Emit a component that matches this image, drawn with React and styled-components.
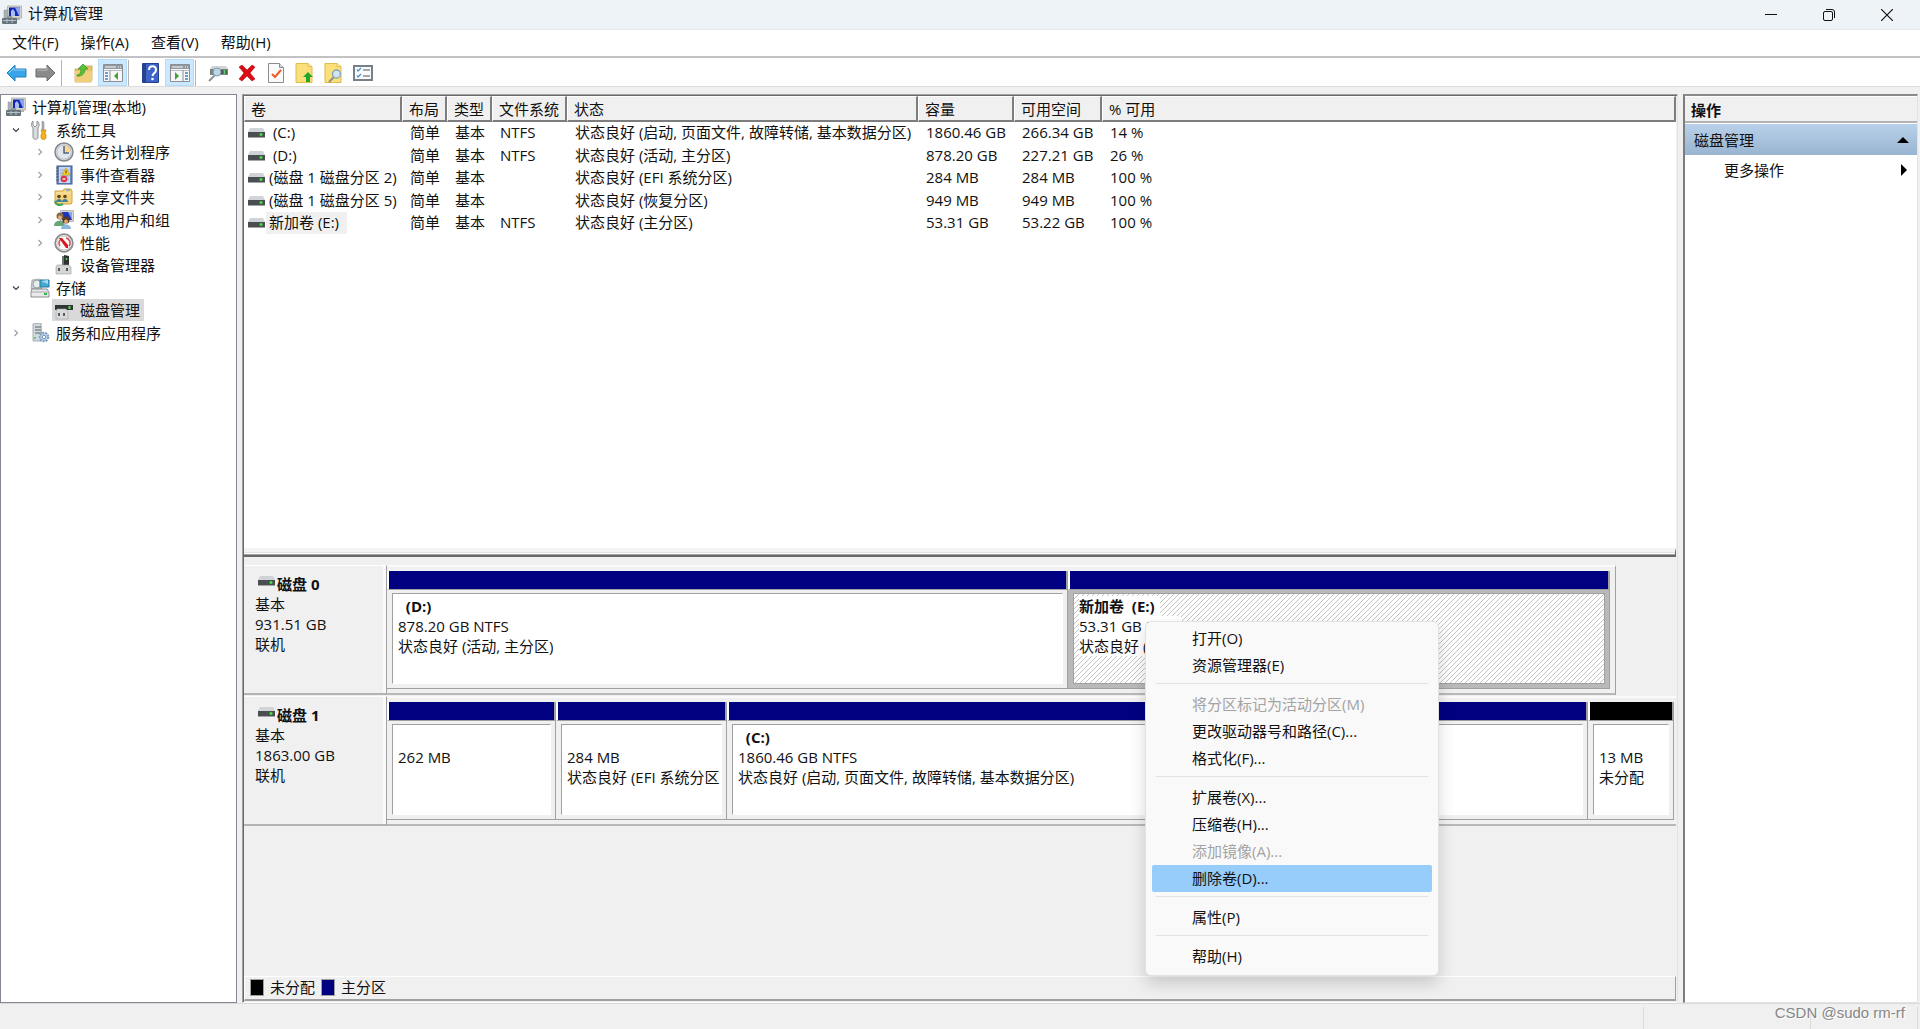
import { useState } from 'react'
import styled, { createGlobalStyle } from 'styled-components'

const colors = {
    face: '#f0f0f0',
    line: '#a0a0a0',
    dark: '#696969',
    light: '#e3e3e3',
    primary: '#000080',
    unallocated: '#000000',
    text: '#111111',
    disabled: '#a3a3a3',
}

const GlobalStyle = createGlobalStyle`
    * {
        box-sizing: border-box;
    }
    body {
        margin: 0;
        background: ${colors.face};
        color: ${colors.text};
        font-family: 'Open Sans', 'Noto Sans CJK SC', sans-serif;
        font-size: 15px;
        line-height: 20px;
    }
    button {
        margin: 0;
        padding: 0;
        border: 0;
        background: none;
        color: inherit;
        font: inherit;
        text-align: left;
    }
    svg {
        display: block;
        flex: none;
    }
`

const Window = styled.div`
    display: flex;
    flex-direction: column;
    height: 100vh;
    overflow: hidden;
    white-space: nowrap;
`

const TitleBar = styled.header`
    display: flex;
    align-items: center;
    height: 29px;
    padding: 0 4px 0 2px;
    background: #eef3f8;
`

const Title = styled.h1`
    flex: 1;
    margin: 0 0 0 6px;
    padding-bottom: 3px;
    font-size: 15px;
    font-weight: 400;
`

const WindowButton = styled.button`
    display: grid;
    place-items: center;
    width: 58px;
    height: 28px;
`

const MenuBar = styled.nav`
    display: flex;
    gap: 2px;
    height: 29px;
    padding-left: 2px;
    border-top: 1px solid #e6e9ec;
    border-bottom: 2px solid #c2c2c4;
    background: #fff;
`

const MenuBarItem = styled.button`
    padding: 0 10px 2px;
`

const ToolBar = styled.div`
    display: flex;
    align-items: flex-end;
    height: 29px;
    padding-left: 2px;
    border-bottom: 1px solid #dcdcdc;
    background: #fff;
`

const ToolButton = styled.button`
    display: grid;
    place-items: center;
    width: 29px;
    height: 27px;
    border: 1px solid ${props => props.$active ? '#b5dbfb' : 'transparent'};
    background: ${props => props.$active ? '#cce8ff' : 'transparent'};
`

const ToolSeparator = styled.span`
    width: 1px;
    height: 26px;
    margin: 0 7px 0 1px;
    background: #b4b4b4;
`

const Main = styled.main`
    display: grid;
    grid-template-columns: 237px minmax(0, 1fr) 235px;
    gap: 5px;
    flex: 1;
    min-height: 0;
    padding: 7px 2px 0 0;
`

const TreePane = styled.nav`
    border: 1px solid #828790;
    background: #fff;
`

const Tree = styled.ul`
    display: grid;
    grid-template-rows: repeat(11, 1fr);
    height: 248px;
    margin: 1px 0 0;
    padding: 0;
    list-style: none;
`

const TreeRow = styled.li`
    display: flex;
    align-items: center;
    padding-left: ${props => props.$indent}px;
`

const Expander = styled.span`
    display: grid;
    place-items: center;
    width: 20px;
    margin-right: 2px;
`

const TreeLabel = styled.button`
    display: flex;
    align-items: center;
    gap: 6px;
    height: 22px;
    padding: 0 4px 0 2px;
    background: ${props => props.$selected ? '#d9d9d9' : 'transparent'};
`

const CenterPane = styled.section`
    display: flex;
    flex-direction: column;
    min-width: 0;
    border: 1px solid;
    border-color: ${colors.line} ${colors.light} #fff ${colors.line};
    box-shadow: inset 1px 1px 0 ${colors.dark};
    padding: 1px;
`

const VolumeList = styled.div`
    flex: 452 1 0;
    min-height: 0;
    overflow: hidden;
    background: #fff;
`

const VolumeTable = styled.table`
    width: 100%;
    table-layout: fixed;
    border-collapse: separate;
    border-spacing: 0;
`

const HeadCell = styled.th`
    width: ${props => props.$width ? props.$width + 'px' : 'auto'};
    height: 26px;
    padding: 0 0 0 6px;
    border: solid;
    border-width: 1px 2px 2px 1px;
    border-color: #fff #7d7d7d #7d7d7d #fff;
    background: ${colors.face};
    font-weight: 400;
    text-align: left;
`

const VolumeRow = styled.tr`
    height: 22px;
    &:nth-child(even) {
        height: 23px;
    }
`

const Cell = styled.td`
    padding: 0 0 2px 8px;
`

const NameCell = styled(Cell)`
    padding: 0 0 0 4px;
`

const VolumeName = styled.div`
    display: flex;
    align-items: center;
    gap: 1px;
    span {
        padding: 0 8px 2px 3px;
        background: ${props => props.$selected ? colors.face : 'transparent'};
    }
`

const Splitter = styled.div`
    height: 9px;
    border: solid;
    border-width: 4px 1px 2px 0;
    border-color: #f4f4f4 ${colors.dark} ${colors.dark} ${colors.light};
    background: #fff;
    box-shadow: inset 0 1px 0 ${colors.light}, inset 0 -1px 0 ${colors.line};
`

const DiskPane = styled.div`
    flex: 411 1 0;
    min-height: 0;
    padding-top: 8px;
    overflow: hidden;
`

const DiskRow = styled.div`
    display: grid;
    grid-template-columns: 143px minmax(0, 1fr);
    height: 131px;
    padding-bottom: 1px;
`

const DiskLabel = styled.div`
    padding: 8px 0 0 11px;
    border: solid;
    border-width: 1px 1px 2px 0;
    border-color: #fff ${colors.line} #b4b4b4;
    box-shadow: inset -3px 0 0 #fafafa;
`

const DiskName = styled.strong`
    display: flex;
    gap: 2px;
    padding-left: 3px;
    svg {
        margin-top: 2px;
    }
`

const DiskMap = styled.div`
    display: flex;
    margin-right: ${props => props.$short ? 60 : 0}px;
    padding: 4px ${props => props.$short ? 5 : 2}px 4px 0;
    border: solid;
    border-width: 2px ${props => props.$short ? 1 : 0}px 2px 0;
    border-color: #fafafa ${colors.line} #b8b8b8;
`

const Partition = styled.div`
    display: flex;
    flex-direction: column;
    flex: ${props => props.$span} 1 0;
    min-width: 0;
    border-bottom: 1px solid ${colors.line};
`

const PartitionBar = styled.div`
    height: 19px;
    border: solid;
    border-width: 0 2px 1px 2px;
    border-color: #fff ${colors.line} ${colors.line} #fff;
    background: ${props => colors[props.$kind]};
`

const PartitionBody = styled.div`
    flex: 1;
    padding: 3px 4px 4px 5px;
    border-right: 1px solid ${colors.line};
    background: ${props => props.$selected ? '#b9b9b9' : colors.face};
`

const PartitionInfo = styled.div`
    height: 100%;
    padding: 2px 0 0 5px;
    overflow: hidden;
    border: 1px solid;
    border-color: ${colors.line} ${props => props.$selected ? colors.line : '#fff'} ${props => props.$selected ? colors.line : '#fff'} ${colors.line};
    background-color: #fff;
    background-image: ${props => props.$selected
        ? 'linear-gradient(135deg, #fff 44%, #c4c4c4 44% 56%, #fff 56%)'
        : 'none'};
    background-size: 5px 5px;
    p {
        width: fit-content;
        height: 20px;
        margin: 0;
        background: #fff;
    }
    p:first-child {
        padding-right: 5px;
        font-weight: 700;
    }
`

const Legend = styled.div`
    display: flex;
    align-items: center;
    gap: 6px;
    height: 25px;
    padding: 0 0 2px 5px;
    border: solid;
    border-width: 1px 1px 2px 1px;
    border-color: #fff ${colors.line} ${colors.line} #fff;
`

const LegendColor = styled.span`
    width: 14px;
    height: 17px;
    border: 1px solid ${colors.line};
    background: ${props => colors[props.$kind]};
`

const ActionPane = styled.aside`
    border: solid;
    border-width: 2px 1px 1px 2px;
    border-color: #8a8a8a ${colors.light} ${colors.light} #7d7d7d;
    background: #fff;
`

const ActionHead = styled.h2`
    height: 27px;
    margin: 0;
    padding: 3px 0 0 6px;
    border-top: 1px solid #fff;
    border-bottom: 2px solid #b4b4b4;
    background: ${colors.face};
    font-size: 15px;
    font-weight: 700;
`

const ActionButton = styled.button`
    display: flex;
    align-items: center;
    justify-content: space-between;
    width: 100%;
    height: ${props => props.$group ? 31 : 29}px;
    padding: 0 ${props => props.$group ? 8 : 10}px 0 ${props => props.$group ? 9 : 39}px;
    background: ${props => props.$group ? 'linear-gradient(#b9d1ea, #99b4d1)' : 'none'};
`

const ActionGroup = styled.div`
    padding-top: 1px;
`

const StatusBar = styled.footer`
    display: grid;
    grid-template-columns: minmax(0, 1fr) 167px 107px;
    height: 26px;
    padding: 3px 2px 0 0;
    border-top: 1px solid #dadada;
    span {
        border-right: 1px solid #dcdcdc;
    }
`

const Watermark = styled.div`
    position: absolute;
    right: 15px;
    bottom: 6px;
    color: #868686;
    font-family: 'Liberation Sans', sans-serif;
    text-shadow: 1px 1px 0 #fff;
`

const ContextMenu = styled.div`
    position: absolute;
    top: 621px;
    left: 1145px;
    width: 294px;
    padding: 3px 6px 5px;
    border: 1px solid #e2e2e2;
    border-radius: 6px;
    background: #f9f9f9;
    box-shadow: 0 8px 16px rgba(0, 0, 0, 0.16);
    hr {
        height: 1px;
        margin: 4px 4px 7px;
        border: 0;
        background: #e2e2e2;
    }
`

const MenuItem = styled.button`
    display: block;
    width: 100%;
    height: 27px;
    padding: 0 0 2px 40px;
    border-radius: 2px;
    &:disabled {
        color: ${colors.disabled};
    }
    ${props => props.$active && 'background: #96cdfb;'}
`

function Computer() {
    return (
        <svg width="20" height="20" viewBox="0 0 20 20">
            <path d="M5.500 1h14v12h-14z" fill="#d6d5cd" stroke="#a5a49d" strokeWidth=".7" />
            <path d="M7 2.500h11v8.500H7z" fill="#1226b8" />
            <path d="M13 2.500h5v8.500h-1z" fill="#8aa4ee" />
            <path d="M9 11V6l2-2 2 3v4z" fill="#a9bdf5" />
            <path d="M2 5h4v8H2z" fill="#aab1b5" stroke="#8b9296" strokeWidth=".5" />
            <path d="M14 13h4v2h-4z" fill="#b5b4ac" />
            <path d="M5 11h5v3H5z" fill="#8c969b" />
            <rect x="0" y="13" width="15" height="6" rx="1" fill="#66757d" />
            <path d="M1 15.500h13M5 14v4M10 14v4" stroke="#b5c1c6" />
        </svg>
    )
}

function Tools() {
    return (
        <svg width="20" height="20" viewBox="0 0 20 20">
            <path d="M3 1v4l2 2 2-2V1c2 1 3 4 1 7v9c0 3-5 3-5 0V8C1 6 1 3 3 1z" fill="#d9dcde" stroke="#8b9093" />
            <path d="M12 1l2 1v8h-2z" fill="#a7acaf" stroke="#888" strokeWidth=".5" />
            <path d="M11 10h5l-1 3 1 2v3c-1 2-4 2-5 0v-3l1-2z" fill="#f7b21b" stroke="#c98508" strokeWidth=".7" />
        </svg>
    )
}

function Clock() {
    return (
        <svg width="20" height="20" viewBox="0 0 20 20">
            <circle cx="10" cy="10" r="9" fill="#dfe6ed" stroke="#858585" strokeWidth="1.500" />
            <path d="M10 10V3a7 7 0 0 1 7 7z" fill="#f9d695" />
            <circle cx="10" cy="10" r="7.200" fill="none" stroke="#b9bec4" />
            <path d="M10 4v7h5" fill="none" stroke="#50637c" strokeWidth="1.500" />
        </svg>
    )
}

function EventLog() {
    return (
        <svg width="20" height="20" viewBox="0 0 20 20">
            <rect x="3" y="1" width="15" height="18" fill="#6f8fc5" stroke="#405b93" />
            <path d="M5 2h11v16H5z" fill="#c9d8f0" />
            <path d="M6 5h9M6 8h9M6 11h9M6 14h9" stroke="#8ea6d0" />
            <path d="M2 3h3M2 6h3M2 9h3M2 12h3M2 15h3" stroke="#5f6470" strokeWidth="1.200" />
            <path d="M12 3l4 7H8z" fill="#ffd51f" stroke="#bf940c" strokeWidth=".6" />
            <path d="M12 5.500v3" stroke="#333" />
            <circle cx="10" cy="14" r="3.300" fill="#d93545" />
            <path d="M8.500 14h3" stroke="#fff" strokeWidth="1.300" />
        </svg>
    )
}

function SharedFolder() {
    return (
        <svg width="20" height="20" viewBox="0 0 20 20">
            <path d="M1 4h8l1-2h7l1 2v12l-1 1H1z" fill="#f6d27a" stroke="#d0a443" />
            <path d="M12 3h4" stroke="#64a8d8" strokeWidth="1.500" />
            <path d="M2 6h15" stroke="#fbe7b0" />
            <circle cx="5" cy="9.500" r="1.800" fill="#5d4426" />
            <circle cx="11" cy="9.500" r="1.800" fill="#5d4426" />
            <path d="M2 15c0-4 6-4 6 0zM8 15c0-4 6-4 6 0z" fill="#3f7f9e" />
            <path d="M1 14c1 4 4 5 8 3" fill="none" stroke="#37a45a" strokeWidth="2" />
        </svg>
    )
}

function Users() {
    return (
        <svg width="20" height="20" viewBox="0 0 20 20">
            <path d="M6.500 .500h13v11h-13z" fill="#d6d5cd" stroke="#a5a49d" strokeWidth=".7" />
            <path d="M8 2h10v8H8z" fill="#1b35bd" />
            <path d="M14 2h4v8z" fill="#8aa4ee" />
            <circle cx="6" cy="6" r="3.500" fill="#8a6a45" />
            <circle cx="6" cy="7.500" r="2" fill="#e3ae7d" />
            <path d="M0 16c0-7 11-7 11 0z" fill="#69a578" />
            <circle cx="12" cy="10" r="3.500" fill="#5b3a21" />
            <circle cx="12" cy="11.500" r="2" fill="#dca879" />
            <path d="M7 19c0-6 10-6 10 0z" fill="#8ab8dc" />
        </svg>
    )
}

function Gauge() {
    return (
        <svg width="20" height="20" viewBox="0 0 20 20">
            <circle cx="10" cy="10" r="8.800" fill="#fafafa" stroke="#8a8a8a" strokeWidth="1.800" />
            <circle cx="10" cy="10" r="7" fill="none" stroke="#c7c7c7" />
            <path d="M6 13a5 5 0 0 1 1-7M12 5a5 5 0 0 1 3 8" fill="none" stroke="#d9484c" strokeWidth="1.500" />
            <path d="M5 5l3 0 6 7v3h-2z" fill="#dd161d" />
        </svg>
    )
}

function Device() {
    return (
        <svg width="20" height="20" viewBox="0 0 20 20">
            <path d="M8 1h5v9H8z" fill="#6d7571" />
            <path d="M10 0l5 1v9h-5z" fill="#2c332f" />
            <path d="M12.500 3v2" stroke="#58d261" strokeWidth="1.500" />
            <path d="M3 10h12l2 2v7H2v-7z" fill="#d3d5d7" stroke="#9b9da0" strokeWidth=".6" />
            <path d="M5 13v3M13 13v3" stroke="#333" strokeWidth="1.500" />
        </svg>
    )
}

function Storage() {
    return (
        <svg width="20" height="20" viewBox="0 0 20 20">
            <path d="M2 2l8-1 2 10H1z" fill="#c9d0d2" stroke="#939b9e" strokeWidth=".7" />
            <circle cx="7" cy="6" r="4" fill="#e8eeee" stroke="#92a19e" />
            <path d="M10 2h9v7h-9z" fill="#47a8d0" stroke="#29789c" />
            <path d="M11 3l7-1v4z" fill="#a4def1" />
            <path d="M2 11h15l2 3v5H1v-5z" fill="#e7e9ea" stroke="#777" strokeWidth=".8" />
            <path d="M1 14h18" stroke="#aaa" />
            <path d="M14 16h3" stroke="#2bb943" strokeWidth="2" />
        </svg>
    )
}

function DiskManager() {
    return (
        <svg width="20" height="20" viewBox="0 0 20 20">
            <path d="M4 2h12l2 3H2z" fill="#d3d5d7" />
            <path d="M1 5h18v5H1z" fill="#303733" />
            <path d="M15.500 6v3" stroke="#53dd54" strokeWidth="2" />
            <path d="M3 9h9l2 3v7H2v-7z" fill="#d8dadc" stroke="#a1a4a7" strokeWidth=".6" />
            <path d="M5 13v3M10 13v3" stroke="#333" strokeWidth="1.500" />
        </svg>
    )
}

function Services() {
    return (
        <svg width="20" height="20" viewBox="0 0 20 20">
            <path d="M3 1l8-1 1 18H3z" fill="#d2dadd" stroke="#899398" strokeWidth=".7" />
            <path d="M5 4h6M5 7h6M5 10h6" stroke="#58656b" />
            <path d="M5 14v2" stroke="#4dba5a" strokeWidth="1.500" />
            <circle cx="14" cy="14" r="4.300" fill="#b9d1e8" stroke="#7f9fbf" strokeWidth="2" strokeDasharray="2 1" />
            <circle cx="14" cy="14" r="1.700" fill="#fff" stroke="#7895b3" />
        </svg>
    )
}

function Drive() {
    return (
        <svg width="17" height="10" viewBox="0 0 17 10">
            <path d="M2 0h13l2 4H0z" fill="#d0d4d8" />
            <path d="M0 4h17v5H0z" fill="#4b4e50" />
            <path d="M0 9h17v1H0z" fill="#a3a6a8" />
            <path d="M13 5v3M11.500 6.500h3" stroke="#3ce63e" strokeWidth="1.500" />
        </svg>
    )
}

function Arrow({ color, edge, flip }) {
    return (
        <svg width="21" height="18" viewBox="0 0 21 18">
            <path
                d="M1 9l8-8v4h11v8H9v4z"
                fill={color}
                stroke={edge}
                strokeLinejoin="round"
                transform={flip ? 'rotate(180 10.5 9)' : undefined}
            />
            <path d={flip ? 'M2 6h10V3' : 'M3 9l5-5v2h11'} fill="none" stroke="#fff" strokeOpacity=".45" />
        </svg>
    )
}

function FolderUp() {
    return (
        <svg width="20" height="20" viewBox="0 0 20 20">
            <path d="M1 6h8l2-3h7v14l-1 2H1z" fill="#e8c367" stroke="#c49a3b" strokeWidth=".7" />
            <path d="M1 8h17v11H1z" fill="#f0cf7c" />
            <path d="M3 12c3 0 4-3 4-6H4l5-5 5 5h-3c0 4-3 8-8 7z" fill="#52c33b" stroke="#30912a" strokeWidth=".7" />
        </svg>
    )
}

function PanelIcon({ right }) {
    return (
        <svg width="20" height="18" viewBox="0 0 20 18">
            <path d="M.500.500h19v17H.500z" fill="#f7f7f7" stroke="#8a9096" />
            <path d="M1 1h18v4H1z" fill="#8f979f" />
            <path d="M2 3h11M15 3h1M17 3h1" stroke="#fff" />
            <path d="M1 6.500h18" stroke="#b9bec4" />
            <path d={right ? 'M13 6v11' : 'M7 6v11'} stroke="#8a9096" />
            <path d={right ? 'M15 9h3M15 12h3M15 15h3' : 'M2 9h3M2 12h3M2 15h3'} stroke="#4781bd" strokeWidth="1.300" />
            <path d={right ? 'M5 8v8l4-4z' : 'M15 8v8l-4-4z'} fill="#3fa33a" />
        </svg>
    )
}

function HelpIcon() {
    return (
        <svg width="17" height="20" viewBox="0 0 17 20">
            <path d="M.500.500h16v19H.500z" fill="#3e63c8" stroke="#263f8c" />
            <path d="M1 1h3v18H1z" fill="#27418f" />
            <path d="M7 7c0-5 7-5 7 0 0 3-3 3-3.500 6" fill="none" stroke="#fff" strokeWidth="2" />
            <circle cx="10.500" cy="16" r="1.300" fill="#fff" />
        </svg>
    )
}

function FindDrive() {
    return (
        <svg width="20" height="18" viewBox="0 0 20 18">
            <path d="M4 2h14l2 3H2z" fill="#d0d4d6" />
            <path d="M2 5h18v6H2z" fill="#7b8480" />
            <path d="M12 6h7v4h-7z" fill="#4a524e" />
            <path d="M16.500 6v4" stroke="#54d357" strokeWidth="2" />
            <path d="M7 11l-6 6" stroke="#8a9297" strokeWidth="2" />
            <circle cx="9" cy="8" r="4" fill="#b9d9ea" stroke="#7f9cac" />
        </svg>
    )
}

function DeleteIcon() {
    return (
        <svg width="18" height="18" viewBox="0 0 18 18">
            <path d="M1 3l3-2 5 5 5-5 3 2-5 6 5 6-3 2-5-5-5 5-3-2 5-6z" fill="#dc0a17" stroke="#a9000a" strokeWidth=".5" />
        </svg>
    )
}

function CheckDoc() {
    return (
        <svg width="16" height="20" viewBox="0 0 16 20">
            <path d="M.500.500h11l4 4v15H.500z" fill="#fafafa" stroke="#8c8c8c" />
            <path d="M11.500.500v4h4" fill="#ddd" stroke="#8c8c8c" />
            <path d="M4 11l3 3 6-7" fill="none" stroke="#ee5a24" strokeWidth="2" />
        </svg>
    )
}

function NoteIcon({ find }) {
    return (
        <svg width="19" height="20" viewBox="0 0 19 20">
            <path d="M1 .500h12l4 3v16H1z" fill="#fbdf78" stroke="#e0bc4c" />
            <path d="M13 .500v3h4" fill="#fff1b5" stroke="#e0bc4c" />
            {find
                ? <>
                    <path d="M10 14l-5 5" stroke="#8a8f93" strokeWidth="2" />
                    <circle cx="12.500" cy="11" r="4" fill="#cfe6f3" stroke="#84a3b8" strokeWidth="1.300" />
                </>
                : <path d="M13 9l5 5h-3v5h-4v-5H8z" fill="#25a52b" />}
        </svg>
    )
}

function CheckList() {
    return (
        <svg width="20" height="16" viewBox="0 0 20 16">
            <path d="M1 1h18v14H1z" fill="#fafafa" stroke="#788087" strokeWidth="2" />
            <path d="M4 4.500l1 1.500L8 3M4 10.500l1 1.500L8 9" fill="none" stroke="#3f8ddb" strokeWidth="1.300" />
            <path d="M10 5h7M10 11h7" stroke="#8c8c8c" strokeWidth="1.500" />
        </svg>
    )
}

function Chevron({ open }) {
    return (
        <svg width="8" height="8" viewBox="0 0 8 8">
            <path
                d={open ? 'M1 2.500l3 3 3-3' : 'M2.500 1l3 3-3 3'}
                fill="none"
                stroke={open ? '#404040' : '#a0a0a0'}
                strokeWidth="1.200"
            />
        </svg>
    )
}

const treeItems = [
    { label: '计算机管理(本地)', level: 0, Icon: Computer },
    { label: '系统工具', level: 1, Icon: Tools, state: 'open' },
    { label: '任务计划程序', level: 2, Icon: Clock, state: 'closed' },
    { label: '事件查看器', level: 2, Icon: EventLog, state: 'closed' },
    { label: '共享文件夹', level: 2, Icon: SharedFolder, state: 'closed' },
    { label: '本地用户和组', level: 2, Icon: Users, state: 'closed' },
    { label: '性能', level: 2, Icon: Gauge, state: 'closed' },
    { label: '设备管理器', level: 2, Icon: Device },
    { label: '存储', level: 1, Icon: Storage, state: 'open' },
    { label: '磁盘管理', level: 2, Icon: DiskManager },
    { label: '服务和应用程序', level: 1, Icon: Services, state: 'closed' },
]

const columns = [
    ['卷', 158],
    ['布局', 45],
    ['类型', 45],
    ['文件系统', 75],
    ['状态', 351],
    ['容量', 96],
    ['可用空间', 88],
    ['% 可用', 0],
]

const volumes = [
    ['\u00a0(C:)', '简单', '基本', 'NTFS', '状态良好 (启动, 页面文件, 故障转储, 基本数据分区)', '1860.46 GB', '266.34 GB', '14 %'],
    ['\u00a0(D:)', '简单', '基本', 'NTFS', '状态良好 (活动, 主分区)', '878.20 GB', '227.21 GB', '26 %'],
    ['(磁盘 1 磁盘分区 2)', '简单', '基本', '', '状态良好 (EFI 系统分区)', '284 MB', '284 MB', '100 %'],
    ['(磁盘 1 磁盘分区 5)', '简单', '基本', '', '状态良好 (恢复分区)', '949 MB', '949 MB', '100 %'],
    ['新加卷 (E:)', '简单', '基本', 'NTFS', '状态良好 (主分区)', '53.31 GB', '53.22 GB', '100 %'],
]

// span : largeur relative de la partition
const disks = [
    {
        name: '磁盘 0',
        size: '931.51 GB',
        short: true,
        partitions: [
            { span: 681, kind: 'primary', lines: ['\u00a0\u00a0(D:)', '878.20 GB NTFS', '状态良好 (活动, 主分区)'] },
            { span: 542, kind: 'primary', selected: true, lines: ['新加卷\u00a0\u00a0(E:)', '53.31 GB NTFS', '状态良好 (主分区)'] },
        ],
    },
    {
        name: '磁盘 1',
        size: '1863.00 GB',
        partitions: [
            { span: 169, kind: 'primary', lines: ['', '262 MB', ''] },
            { span: 171, kind: 'primary', lines: ['', '284 MB', '状态良好 (EFI 系统分区'] },
            { span: 561, kind: 'primary', lines: ['\u00a0\u00a0(C:)', '1860.46 GB NTFS', '状态良好 (启动, 页面文件, 故障转储, 基本数据分区)'] },
            { span: 300, kind: 'primary', lines: ['', '949 MB', ''] },
            { span: 86, kind: 'unallocated', lines: ['', '13 MB', '未分配'] },
        ],
    },
]

const menuItems = [
    { label: '打开(O)' },
    { label: '资源管理器(E)' },
    null,
    { label: '将分区标记为活动分区(M)', disabled: true },
    { label: '更改驱动器号和路径(C)...' },
    { label: '格式化(F)...' },
    null,
    { label: '扩展卷(X)...' },
    { label: '压缩卷(H)...' },
    { label: '添加镜像(A)...', disabled: true },
    { label: '删除卷(D)...' },
    null,
    { label: '属性(P)' },
    null,
    { label: '帮助(H)' },
]

function App() {
    const [selectedNode, setSelectedNode] = useState('磁盘管理')
    const [activeItem, setActiveItem] = useState('删除卷(D)...')

    return (
        <Window>
            <GlobalStyle />
            <TitleBar>
                <Computer />
                <Title>计算机管理</Title>
                <WindowButton aria-label="最小化">
                    <svg width="12" height="12"><path d="M0 5.500h12" stroke="#111" /></svg>
                </WindowButton>
                <WindowButton aria-label="还原">
                    <svg width="12" height="12" fill="none" stroke="#111">
                        <rect x=".5" y="2.500" width="9" height="9" rx="1.500" />
                        <path d="M3 .500h6a2.500 2.500 0 0 1 2.500 2.500v6" />
                    </svg>
                </WindowButton>
                <WindowButton aria-label="关闭">
                    <svg width="12" height="12"><path d="M0 0l12 12M12 0L0 12" stroke="#111" strokeWidth="1.200" /></svg>
                </WindowButton>
            </TitleBar>

            <MenuBar>
                {['文件(F)', '操作(A)', '查看(V)', '帮助(H)'].map(label => (
                    <MenuBarItem key={label}>{label}</MenuBarItem>
                ))}
            </MenuBar>

            <ToolBar>
                <ToolButton aria-label="后退"><Arrow color="#39a5ea" edge="#2481bd" /></ToolButton>
                <ToolButton aria-label="前进"><Arrow color="#8b8b8b" edge="#6b6b6b" flip /></ToolButton>
                <ToolSeparator />
                <ToolButton aria-label="向上"><FolderUp /></ToolButton>
                <ToolButton aria-label="显示控制台树" $active><PanelIcon /></ToolButton>
                <ToolSeparator />
                <ToolButton aria-label="帮助"><HelpIcon /></ToolButton>
                <ToolButton aria-label="显示操作窗格" $active><PanelIcon right /></ToolButton>
                <ToolSeparator />
                <ToolButton aria-label="重新扫描"><FindDrive /></ToolButton>
                <ToolButton aria-label="删除"><DeleteIcon /></ToolButton>
                <ToolButton aria-label="属性"><CheckDoc /></ToolButton>
                <ToolButton aria-label="导出"><NoteIcon /></ToolButton>
                <ToolButton aria-label="查找"><NoteIcon find /></ToolButton>
                <ToolButton aria-label="设置"><CheckList /></ToolButton>
            </ToolBar>

            <Main>
                <TreePane>
                    <Tree>
                        {treeItems.map(({ label, level, Icon, state }) => (
                            <TreeRow key={label} $indent={level === 0 ? 3 : level * 24 - 19}>
                                {level > 0 && <Expander>{state && <Chevron open={state === 'open'} />}</Expander>}
                                <TreeLabel $selected={label === selectedNode} onClick={() => setSelectedNode(label)}>
                                    <Icon />
                                    {label}
                                </TreeLabel>
                            </TreeRow>
                        ))}
                    </Tree>
                </TreePane>

                <CenterPane>
                    <VolumeList>
                        <VolumeTable>
                            <thead>
                                <tr>
                                    {columns.map(([label, width]) => (
                                        <HeadCell key={label} $width={width}>{label}</HeadCell>
                                    ))}
                                </tr>
                            </thead>
                            <tbody>
                                {volumes.map(([name, ...cells]) => (
                                    <VolumeRow key={name}>
                                        <NameCell>
                                            <VolumeName $selected={name === '新加卷 (E:)'}>
                                                <Drive />
                                                <span>{name}</span>
                                            </VolumeName>
                                        </NameCell>
                                        {cells.map((cell, i) => <Cell key={i}>{cell}</Cell>)}
                                    </VolumeRow>
                                ))}
                            </tbody>
                        </VolumeTable>
                    </VolumeList>
                    <Splitter />
                    <DiskPane>
                        {disks.map(disk => (
                            <DiskRow key={disk.name}>
                                <DiskLabel>
                                    <DiskName><Drive />{disk.name}</DiskName>
                                    <div>基本</div>
                                    <div>{disk.size}</div>
                                    <div>联机</div>
                                </DiskLabel>
                                <DiskMap $short={disk.short}>
                                    {disk.partitions.map((part, i) => (
                                        <Partition key={i} $span={part.span}>
                                            <PartitionBar $kind={part.kind} />
                                            <PartitionBody $selected={part.selected}>
                                                <PartitionInfo $selected={part.selected}>
                                                    {part.lines.map((line, n) => <p key={n}>{line}</p>)}
                                                </PartitionInfo>
                                            </PartitionBody>
                                        </Partition>
                                    ))}
                                </DiskMap>
                            </DiskRow>
                        ))}
                    </DiskPane>
                    <Legend>
                        <LegendColor $kind="unallocated" />
                        未分配
                        <LegendColor $kind="primary" />
                        主分区
                    </Legend>
                </CenterPane>

                <ActionPane>
                    <ActionHead>操作</ActionHead>
                    <ActionGroup>
                        <ActionButton $group>
                            磁盘管理
                            <svg width="12" height="6"><path d="M0 6l6-6 6 6z" /></svg>
                        </ActionButton>
                        <ActionButton>
                            更多操作
                            <svg width="6" height="12"><path d="M0 0l6 6-6 6z" /></svg>
                        </ActionButton>
                    </ActionGroup>
                </ActionPane>
            </Main>

            <StatusBar>
                <span />
                <span />
                <span />
            </StatusBar>
            <Watermark>CSDN @sudo rm-rf</Watermark>

            <ContextMenu role="menu">
                {menuItems.map((item, i) => item
                    ? (
                        <MenuItem
                            key={item.label}
                            role="menuitem"
                            disabled={item.disabled}
                            $active={item.label === activeItem}
                            onMouseEnter={() => setActiveItem(item.label)}
                        >
                            {item.label}
                        </MenuItem>
                    )
                    : <hr key={i} />)}
            </ContextMenu>
        </Window>
    )
}

export default App
